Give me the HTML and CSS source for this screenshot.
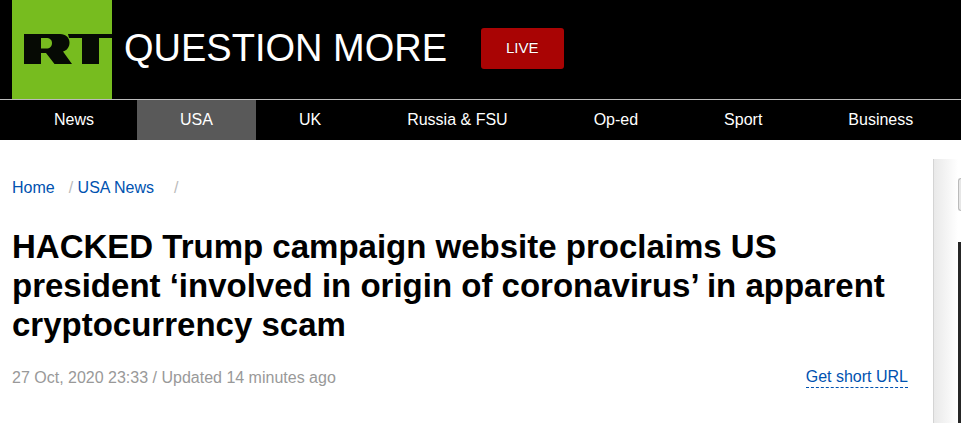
FILE: index.html
```html
<!DOCTYPE html>
<html lang="en">
<head>
    <meta charset="UTF-8">
    <meta name="viewport" content="width=device-width, initial-scale=1.0">
    <title>RT - USA News</title>
    <link rel="stylesheet" href="styles.css">
</head>
<body>
    <!-- Header -->
    <header class="header">
        <div class="header-top">
            <a href="#home" class="logo" aria-label="RT">
                <svg viewBox="0 0 100 99" width="100" height="99">
                    <path fill="#060a04" fill-rule="evenodd" d="M12 34H48C54 34 57.500 38 57.500 42.500C57.500 47 55 50.500 51 51.500L60 64H42.500L34 53H29V64H12ZM29 38V48.500H34C38 48.500 40 46.500 40 43C40 40 38 38 34 38Z"/>
                    <path fill="#060a04" d="M56 34H100V38H87V64H70V38H57Z"/>
                </svg>
            </a>
            <div class="header-info">
                <span class="slogan">QUESTION MORE</span>
                <a href="#live" class="live-btn">LIVE</a>
            </div>
        </div>
        <nav class="nav-menu">
            <a href="#news" class="nav-item">News</a>
            <a href="#usa" class="nav-item active">USA</a>
            <a href="#uk" class="nav-item">UK</a>
            <a href="#russia" class="nav-item">Russia &amp; FSU</a>
            <a href="#op-ed" class="nav-item">Op-ed</a>
            <a href="#sport" class="nav-item">Sport</a>
            <a href="#business" class="nav-item">Business</a>
        </nav>
    </header>

    <div class="layout">
        <!-- Article -->
        <main class="article">
            <nav class="breadcrumbs">
                <a href="#home">Home</a><span class="slash">/</span>
                <a href="#usa">USA News</a><span class="slash last">/</span>
            </nav>
            <h1 class="title">HACKED Trump campaign website proclaims US president ‘involved in origin of coronavirus’ in apparent cryptocurrency scam</h1>
            <div class="meta">
                <span class="date">27 Oct, 2020 23:33 / Updated 14 minutes ago</span>
                <a href="#short" class="short-url">Get short URL</a>
            </div>
        </main>

        <!-- Sidebar -->
        <aside class="sidebar">
            <div class="sidebar-search"></div>
            <div class="sidebar-block"></div>
        </aside>
    </div>
</body>
</html>
```
FILE: styles.css
```css
* {
    margin: 0;
    padding: 0;
    box-sizing: border-box;
}

body {
    font-family: "Liberation Sans", Arial, sans-serif;
    font-size: 16px;
    line-height: 20px;
    color: #000;
    background-color: #fff;
    overflow-x: hidden;
}

a {
    color: #0052b0;
    text-decoration: none;
}

/* Header */
.header {
    background-color: #000;
}

.header-top {
    display: flex;
    align-items: center;
    padding: 0 12px;
    border-bottom: 1px solid #bbb;
}

.logo {
    background-color: #77bc1f;
}

.logo svg {
    display: block;
}

.header-info {
    display: flex;
    align-items: center;
    padding: 0 0 3px 12px;
}

.slogan {
    font-size: 38px;
    line-height: 44px;
    white-space: nowrap;
    color: #fff;
}

.live-btn {
    margin-left: 34px;
    padding: 10px 25px 11px;
    border-radius: 3px;
    background-color: #a90404;
    font-size: 15px;
    color: #fff;
    text-shadow: 0 -1px 1px #600;
}

.nav-menu {
    display: flex;
    padding-left: 11px;
}

.nav-item {
    padding: 10px 43px;
    white-space: nowrap;
    color: #fff;
}

.nav-item.active {
    background-color: #595959;
}

/* Content */
.layout {
    display: flex;
    min-height: calc(100vh - 140px);
    padding-top: 19px;
}

.article {
    flex: 1;
    padding: 19px 25px 20px 12px;
}

.breadcrumbs {
    margin-bottom: 29px;
}

.slash {
    margin-left: 14px;
    color: #bbb;
}

.slash.last {
    margin-left: 20px;
}

.title {
    margin-bottom: 24px;
    font-size: 33px;
    line-height: 39px;
    font-weight: 700;
}

.meta {
    display: flex;
    justify-content: space-between;
}

.date {
    color: #999;
}

.short-url {
    line-height: 18px;
    border-bottom: 1px dashed #0052b0;
}

/* Sidebar */
.sidebar {
    display: flex;
    flex-direction: column;
    width: 28px;
    padding: 19px 0 0 24px;
    border-left: 1px solid #d4d4d4;
    background: linear-gradient(to right, #e9e9e9, #fff 24px);
}

.sidebar-search {
    height: 33px;
    margin-bottom: 31px;
    border: 1px solid #bbb;
    border-right: 0;
    border-radius: 3px 0 0 3px;
    background-color: #e6e6e6;
}

.sidebar-block {
    flex: 1;
    background-color: #262626;
}
```
